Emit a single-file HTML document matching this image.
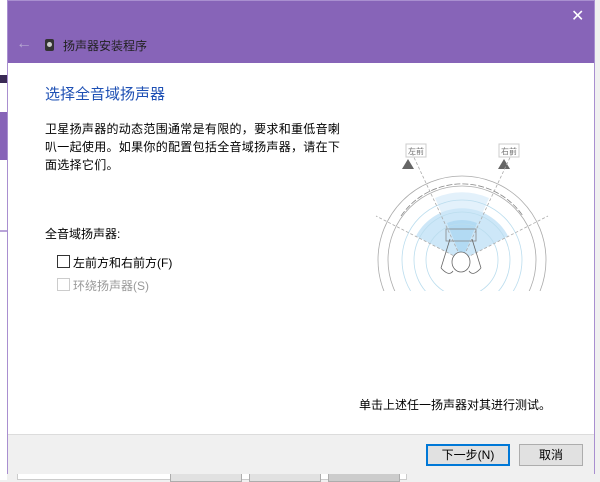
<!DOCTYPE html>
<html><head><meta charset="utf-8"><style>
*{margin:0;padding:0;box-sizing:border-box}
body{width:600px;height:480px;overflow:hidden;background:#f0f0f0;position:relative;font-family:"Liberation Sans","Noto Sans CJK SC",sans-serif;font-size:12px;color:#000}
.abs{position:absolute}
.win{left:7px;top:0;width:588px;height:474px;border:1px solid #a98fd0;background:#fff}
.title{left:0;top:0;width:586px;height:62px;background:#8764b8}
.foot{left:0;top:433px;width:586px;height:40px;background:#f0f0f0;border-top:1px solid #dcdcdc}
.btn{height:22px;border:1px solid #adadad;background:#e1e1e1;text-align:center;line-height:20px;font-size:12px}
</style></head><body>
<div class="abs" style="left:0;top:0;width:7px;height:480px;background:#fff"></div>
<div class="abs" style="left:0;top:75px;width:7px;height:8px;background:#3a2a55"></div>
<div class="abs" style="left:0;top:112px;width:7px;height:48px;background:#8764b8"></div>
<div class="abs" style="left:0;top:230px;width:7px;height:2px;background:#b9a4d8"></div>
<div class="abs" style="left:17px;top:472px;width:390px;height:8px;background:#fff;border:1px solid #ccc"></div>
<div class="abs btn" style="left:170px;top:472px;width:72px;height:10px"></div>
<div class="abs btn" style="left:249px;top:472px;width:72px;height:10px"></div>
<div class="abs btn" style="left:328px;top:472px;width:72px;height:10px;background:#ccc"></div>
<div class="abs win">
 <div class="abs title">
  <div class="abs" style="left:563px;top:5px;color:#fff;font-size:16px">✕</div>
  <div class="abs" style="left:8px;top:34px;color:#b8a8d4;font-size:16px">←</div>
  <div class="abs" style="left:37px;top:38px;width:9px;height:12px;background:#333;border-radius:2px"><div style="margin:3px 2px;width:5px;height:5px;border-radius:50%;background:#ccc"></div></div>
  <div class="abs" style="left:55px;top:36px;color:#222;font-size:12px">扬声器安装程序</div>
 </div>
 <div class="abs" style="left:37px;top:82px;color:#1e50b4;font-size:15px">选择全音域扬声器</div>
 <div class="abs" style="left:37px;top:119px;width:302px;line-height:18px;letter-spacing:0.3px">卫星扬声器的动态范围通常是有限的，要求和重低音喇叭一起使用。如果你的配置包括全音域扬声器，请在下面选择它们。</div>
 <div class="abs" style="left:37px;top:224px">全音域扬声器:</div>
 <div class="abs" style="left:49px;top:254px;width:13px;height:13px;border:1px solid #333"></div>
 <div class="abs" style="left:65px;top:253px">左前方和右前方(F)</div>
 <div class="abs" style="left:49px;top:277px;width:13px;height:13px;border:1px solid #ccc"></div>
 <div class="abs" style="left:65px;top:276px;color:#999">环绕扬声器(S)</div>
 <svg class="abs" style="left:353px;top:130px" width="200" height="160" viewBox="0 0 200 160">
  <rect x="45" y="13" width="20" height="13" fill="#fff" stroke="#ccc"/>
  <rect x="138" y="13" width="20" height="13" fill="#fff" stroke="#ccc"/>
  <text x="47" y="23" font-size="8" fill="#777">左前</text>
  <text x="140" y="23" font-size="8" fill="#777">右前</text>
  <polygon points="41,38 47,28 53,38" fill="#666"/><polygon points="137,38 143,28 149,38" fill="#666"/>
  <path d="M101,129 L74,67 A66,66 0 0 1 128,67 Z" fill="#e3f1fb"/>
  <path d="M101,129 L55,105 A52,52 0 0 1 147,105 Z" fill="#cde7f8"/>
  <path d="M101,129 L86,92 A40,40 0 0 1 116,92 Z" fill="#b2daf3"/>
  <g fill="none" stroke-width="0.8">
   <circle cx="101" cy="129" r="84" stroke="#aaa"/><circle cx="101" cy="129" r="74" stroke="#aaa"/>
   <path d="M40,85 A74,74 0 0 1 162,85" stroke="#888" stroke-dasharray="6,2"/>
   <circle cx="101" cy="129" r="60" stroke="#bde"/><circle cx="101" cy="129" r="48" stroke="#bde"/><circle cx="101" cy="129" r="36" stroke="#bde"/>
   <line x1="101" y1="129" x2="50" y2="20" stroke="#aaa" stroke-dasharray="3,2"/><line x1="101" y1="129" x2="152" y2="20" stroke="#aaa" stroke-dasharray="3,2"/>
   <line x1="101" y1="129" x2="15" y2="85" stroke="#aaa" stroke-dasharray="3,2"/><line x1="101" y1="129" x2="187" y2="85" stroke="#aaa" stroke-dasharray="3,2"/>
   <rect x="85" y="98" width="30" height="12" stroke="#888"/>
   <ellipse cx="100" cy="131" rx="9" ry="10" fill="#fff" stroke="#666"/>
   <path d="M80,137 L89,108 M120,137 L111,108 M80,137 Q88,146 92,140 M120,137 Q112,146 108,140" stroke="#666"/>
  </g>
 </svg>
 <div class="abs" style="left:351px;top:395px">单击上述任一扬声器对其进行测试。</div>
 <div class="abs foot">
  <div class="abs btn" style="left:418px;top:9px;width:84px;border:2px solid #0078d7;line-height:18px">下一步(N)</div>
  <div class="abs btn" style="left:511px;top:9px;width:64px">取消</div>
 </div>
</div>
</body></html>
